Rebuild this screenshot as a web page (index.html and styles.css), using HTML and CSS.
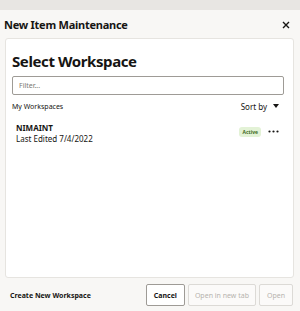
FILE: index.html
```html
<!DOCTYPE html>
<html>

<head>
	<meta charset="UTF-8">
	<title>New Item Maintenance</title>
	<link rel="stylesheet" href="styles.css">
</head>

<body>
	<div class="dialog">
		<div class="dialog-header">
			<h1>New Item Maintenance</h1>
			<button class="close" aria-label="Close">
				<svg width="8" height="8" viewBox="0 0 8 8">
					<path d="M1 1 L7 7 M7 1 L1 7" stroke="#161513" stroke-width="1.4" />
				</svg>
			</button>
		</div>

		<div class="dialog-body">
			<div class="card">
				<h2>Select Workspace</h2>
				<input class="filter" type="text" placeholder="Filter...">

				<div class="list-head">
					<span class="label">My Workspaces</span>
					<span class="sort">Sort by
						<svg width="6" height="4" viewBox="0 0 6 4">
							<path d="M0 0 H6 L3 4 Z" fill="#161513" />
						</svg>
					</span>
				</div>

				<div class="workspace">
					<div class="info">
						<div class="name">NIMAINT</div>
						<div class="edited">Last Edited 7/4/2022</div>
					</div>
					<span class="badge">Active</span>
					<span class="more">
						<svg width="11" height="3" viewBox="0 0 11 3">
							<circle cx="1.5" cy="1.5" r="1.1" fill="#161513" />
							<circle cx="5.5" cy="1.5" r="1.1" fill="#161513" />
							<circle cx="9.5" cy="1.5" r="1.1" fill="#161513" />
						</svg>
					</span>
				</div>
			</div>
		</div>

		<div class="dialog-footer">
			<span class="create">Create New Workspace</span>
			<div class="buttons">
				<button class="btn">Cancel</button>
				<button class="btn disabled narrow">Open in new tab</button>
				<button class="btn disabled">Open</button>
			</div>
		</div>
	</div>
</body>

</html>
```

FILE: styles.css
```css
html,
body {
	margin: 0;
	padding: 0;
	height: 100%;
}

body {
	background: #e8e6e3;
	font-family: "Noto Sans", "Open Sans", sans-serif;
	color: #161513;
}

.dialog {
	margin-top: 10px;
	height: 301px;
	background: #f8f7f5;
	display: flex;
	flex-direction: column;
}

.dialog-header {
	height: 28px;
	display: flex;
	align-items: center;
	justify-content: space-between;
	padding: 0 10px 0 4px;
}

h1 {
	margin: 0;
	font-size: 11px;
	font-weight: 700;
	letter-spacing: -0.25px;
	margin-top: 1px;
}

.close {
	border: none;
	background: none;
	padding: 0;
	display: flex;
	margin-top: 1px;
}

.dialog-body {
	padding: 0 6px 0 5px;
}

.card {
	height: 238px;
	background: #fff;
	border: 1px solid #e6e4e0;
	border-radius: 3px;
	padding: 0 9px 0 6px;
}

h2 {
	margin: 13px 0 0 0;
	font-size: 15px;
	font-weight: 700;
	line-height: 19px;
	letter-spacing: -0.4px;
}

.filter {
	display: block;
	box-sizing: border-box;
	width: 100%;
	height: 19px;
	margin-top: 5px;
	padding: 0 6px;
	border: 1px solid #9e9b96;
	border-radius: 2px;
	font-family: inherit;
	font-size: 7px;
	color: #161513;
}

.filter::placeholder {
	color: #7a7873;
}

.list-head {
	display: flex;
	justify-content: space-between;
	align-items: center;
	margin-top: 6px;
	height: 10px;
	font-size: 7px;
}

.sort {
	display: flex;
	align-items: center;
	gap: 6px;
	font-size: 8px;
	padding-right: 5px;
}

.workspace {
	display: flex;
	align-items: center;
	padding: 0 5px 0 4px;
	margin-top: 12px;
}

.info {
	flex: 1;
}

.name {
	font-size: 8px;
	font-weight: 700;
	line-height: 10px;
}

.edited {
	font-size: 8px;
	line-height: 11px;
}

.badge {
	background: #e3f2d6;
	color: #3f6b24;
	font-size: 5px;
	font-weight: 700;
	padding: 2px 3px;
	border-radius: 3px;
	margin-right: 7px;
	margin-bottom: 4px;
}

.more {
	display: flex;
	margin-bottom: 4px;
}

.dialog-footer {
	flex: 1;
	display: flex;
	align-items: center;
	justify-content: space-between;
	padding: 1px 7px 0 10px;
}

.create {
	font-size: 7px;
	font-weight: 700;
}

.buttons {
	display: flex;
	gap: 3px;
}

.btn {
	height: 22px;
	padding: 0 7px;
	background: #fff;
	border: 1px solid #9e9b96;
	border-radius: 2px;
	font-family: inherit;
	font-size: 7px;
	font-weight: 700;
	color: #161513;
}

.btn.disabled {
	border-color: #dcdad6;
	color: #b6b3ae;
	font-weight: 400;
	background: #fbfaf9;
}

.btn.narrow {
	padding: 0 6px;
}
```
